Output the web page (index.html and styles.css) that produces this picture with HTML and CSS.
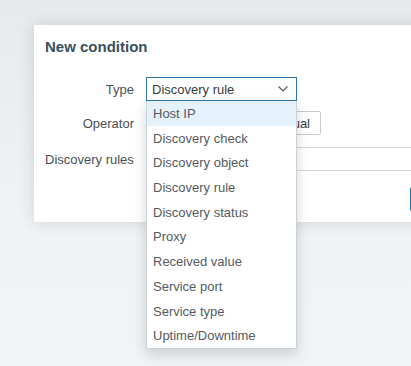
FILE: index.html
```html
<!DOCTYPE html>
<html>
<head>
<meta charset="utf-8">
<link rel="stylesheet" href="styles.css">
</head>
<body>
<div class="overlay">
  <div class="dialog">
    <h4 class="title">New condition</h4>
    <div class="form">
      <div class="row row-type">
        <label class="lbl">Type</label>
        <div class="ctl">
          <div class="select">
            <span>Discovery rule</span>
            <svg class="chev" width="10" height="6" viewBox="0 0 10 6"><path d="M0.5 0.5 L5 5 L9.5 0.5" fill="none" stroke="#555" stroke-width="1.1"/></svg>
            <ul class="menu">
              <li class="hl">Host IP</li>
              <li>Discovery check</li>
              <li>Discovery object</li>
              <li>Discovery rule</li>
              <li>Discovery status</li>
              <li>Proxy</li>
              <li>Received value</li>
              <li>Service port</li>
              <li>Service type</li>
              <li>Uptime/Downtime</li>
            </ul>
          </div>
        </div>
      </div>
      <div class="row row-op">
        <label class="lbl">Operator</label>
        <div class="ctl">
          <div class="seg"><span class="seg-a">Equal</span><span class="seg-b">Not equal</span></div>
        </div>
      </div>
      <div class="row row-rules">
        <label class="lbl">Discovery rules</label>
        <div class="ctl">
          <div class="input"></div>
        </div>
      </div>
      <div class="row row-btn">
        <span class="lbl"></span>
        <div class="ctl"><span class="btn">Select</span></div>
      </div>
    </div>
  </div>
</div>
</body>
</html>
```

FILE: styles.css
```css
* { box-sizing: border-box; }
html, body { margin: 0; padding: 0; }
body {
  width: 411px;
  height: 366px;
  overflow: hidden;
  font-family: "Liberation Sans", Arial, sans-serif;
  font-size: 13px;
  background: linear-gradient(#e8e9ea, #f1f2f3 60%, #f2f3f4);
}
.overlay {
  padding: 25px 0 0 34px;
}
.dialog {
  width: 520px;
  background: #fff;
  box-shadow: 0 0 14px rgba(40, 50, 60, 0.16);
  padding: 13px 0 11px 11px;
}
.title {
  margin: 0;
  font-size: 15px;
  line-height: 17px;
  font-weight: bold;
  color: #3a4f5e;
}
.form {
  margin-top: 22px;
  display: flex;
  flex-direction: column;
}
.row {
  display: flex;
  align-items: center;
  height: 24px;
}
.row-op { margin-top: 10px; }
.row-rules { margin-top: 12px; }
.row-btn { margin-top: 16px; }
.lbl {
  width: 89px;
  flex: none;
  text-align: right;
  color: #4a4f54;
  margin-right: 12px;
}
.row-rules .lbl { text-align: left; white-space: nowrap; }
.ctl { flex: 1; }
.select {
  position: relative;
  width: 151px;
  height: 24px;
  border: 1px solid #2f74a9;
  display: flex;
  align-items: center;
  padding: 0 5px;
  color: #3a3a3a;
}
.select span { flex: 1; }
.chev { margin-right: 3px; }
.menu {
  position: absolute;
  z-index: 5;
  top: 23px;
  left: -1px;
  width: 151px;
  margin: 0;
  padding: 0;
  list-style: none;
  background: #fff;
  border: 1px solid #c9d2d8;
  border-top: none;
  box-shadow: 0 5px 12px rgba(40, 50, 60, 0.2);
}
.menu li {
  height: 24.7px;
  line-height: 23.7px;
  padding: 1px 0 0 6px;
  color: #555a5e;
  white-space: nowrap;
}
.menu li.hl {
  background: #e6f2fb;
}
.seg {
  display: flex;
  width: 175px;
  height: 24px;
  border: 1px solid #c5ccd1;
  border-radius: 2px;
  color: #3a3a3a;
}
.seg span {
  display: flex;
  align-items: center;
  white-space: nowrap;
}
.seg-a { padding: 0 8px; border-right: 1px solid #c5ccd1; }
.seg-b { flex: 1; justify-content: flex-end; padding-right: 10px; }
.input {
  width: 400px;
  height: 24px;
  border: 1px solid #cfd6db;
}
.btn {
  display: inline-flex;
  align-items: center;
  height: 24px;
  margin-left: 264px;
  padding: 0 10px;
  background: #0a7ac0;
  color: #fff;
  border-radius: 2px;
}
```
